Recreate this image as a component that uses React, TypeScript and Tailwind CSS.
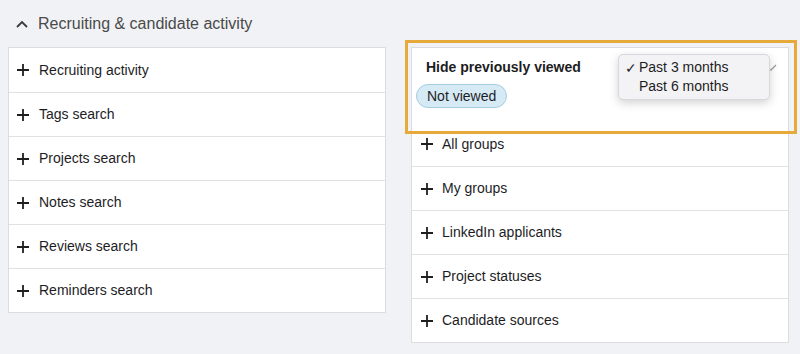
import React from 'react'

const leftRows = [
  'Recruiting activity',
  'Tags search',
  'Projects search',
  'Notes search',
  'Reviews search',
  'Reminders search',
]

const rightRows = [
  'All groups',
  'My groups',
  'LinkedIn applicants',
  'Project statuses',
  'Candidate sources',
]

function PlusIcon() {
  return (
    <svg width="12" height="12" viewBox="0 0 12 12" className="shrink-0">
      <path d="M6 0v12M0 6h12" stroke="#1f1f1f" strokeWidth="1.8" />
    </svg>
  )
}

function Row({ label, pad }: { label: string; pad: string }) {
  return (
    <div className={`flex h-[44px] items-center border-t border-[#e1e1e4] first:border-t-0 ${pad}`}>
      <PlusIcon />
      <span className="text-[14px] text-[#1d1d1f]">{label}</span>
    </div>
  )
}

export default function App() {
  return (
    <div
      className="h-[354px] w-[800px] overflow-hidden bg-[#f1f2f5]"
      style={{ fontFamily: '"Liberation Sans", Arial, sans-serif' }}
    >
      <div className="flex h-[47px] items-center gap-[10px] pl-[16px]">
        <svg width="12" height="8" viewBox="0 0 12 8">
          <path d="M1 7l5-5 5 5" fill="none" stroke="#3a3a3a" strokeWidth="1.8" />
        </svg>
        <span className="text-[16px] text-[#4a4a4a]">Recruiting &amp; candidate activity</span>
      </div>

      <div className="flex items-start gap-[25px] pl-[8px]">
        {/* left column */}
        <div className="w-[378px] border border-[#dcdce0] bg-white">
          {leftRows.map((r) => (
            <Row key={r} label={r} pad="gap-[10px] pl-[8px]" />
          ))}
        </div>

        {/* right column */}
        <div className="relative w-[378px] border border-[#dcdce0] bg-white">
          <div className="h-[74px] pl-[4px] pt-[9px]">
            <div className="pl-[10px] text-[14px] font-bold leading-[20px] text-[#1d1d1f]">
              Hide previously viewed
            </div>
            <div className="mt-[7px] inline-flex h-[24px] items-center rounded-full border border-[#a6cde1] bg-[#d6eaf5] px-[10px] text-[14px] text-[#1d1d1f]">
              Not viewed
            </div>
          </div>

          <div>
            {rightRows.map((r) => (
              <Row key={r} label={r} pad="gap-[9px] pl-[9px]" />
            ))}
          </div>

          {/* partly hidden select arrow */}
          <svg
            width="10"
            height="8"
            viewBox="0 0 10 8"
            className="absolute left-[355px] top-[15px]"
          >
            <path d="M1 6l3 1 5-5" fill="none" stroke="#9a9aa0" strokeWidth="1.2" />
          </svg>

          {/* open dropdown */}
          <div className="absolute left-[206px] top-[6px] w-[152px] rounded-[5px] border border-[#d8d8dc] bg-[#f3f3f5] py-[3px] text-[14px] text-[#1d1d1f] shadow-[0_3px_10px_rgba(0,0,0,0.18)]">
            <div className="flex h-[19px] items-center pl-[6px]">
              <span className="w-[14px] text-[14px] leading-none">✓</span>
              <span>Past 3 months</span>
            </div>
            <div className="flex h-[19px] items-center pl-[20px]">Past 6 months</div>
          </div>

          {/* highlight annotation */}
          <div className="pointer-events-none absolute left-[-7px] top-[-8px] h-[94px] w-[392px] border-[3px] border-[#e8a93b]" />
        </div>
      </div>
    </div>
  )
}
